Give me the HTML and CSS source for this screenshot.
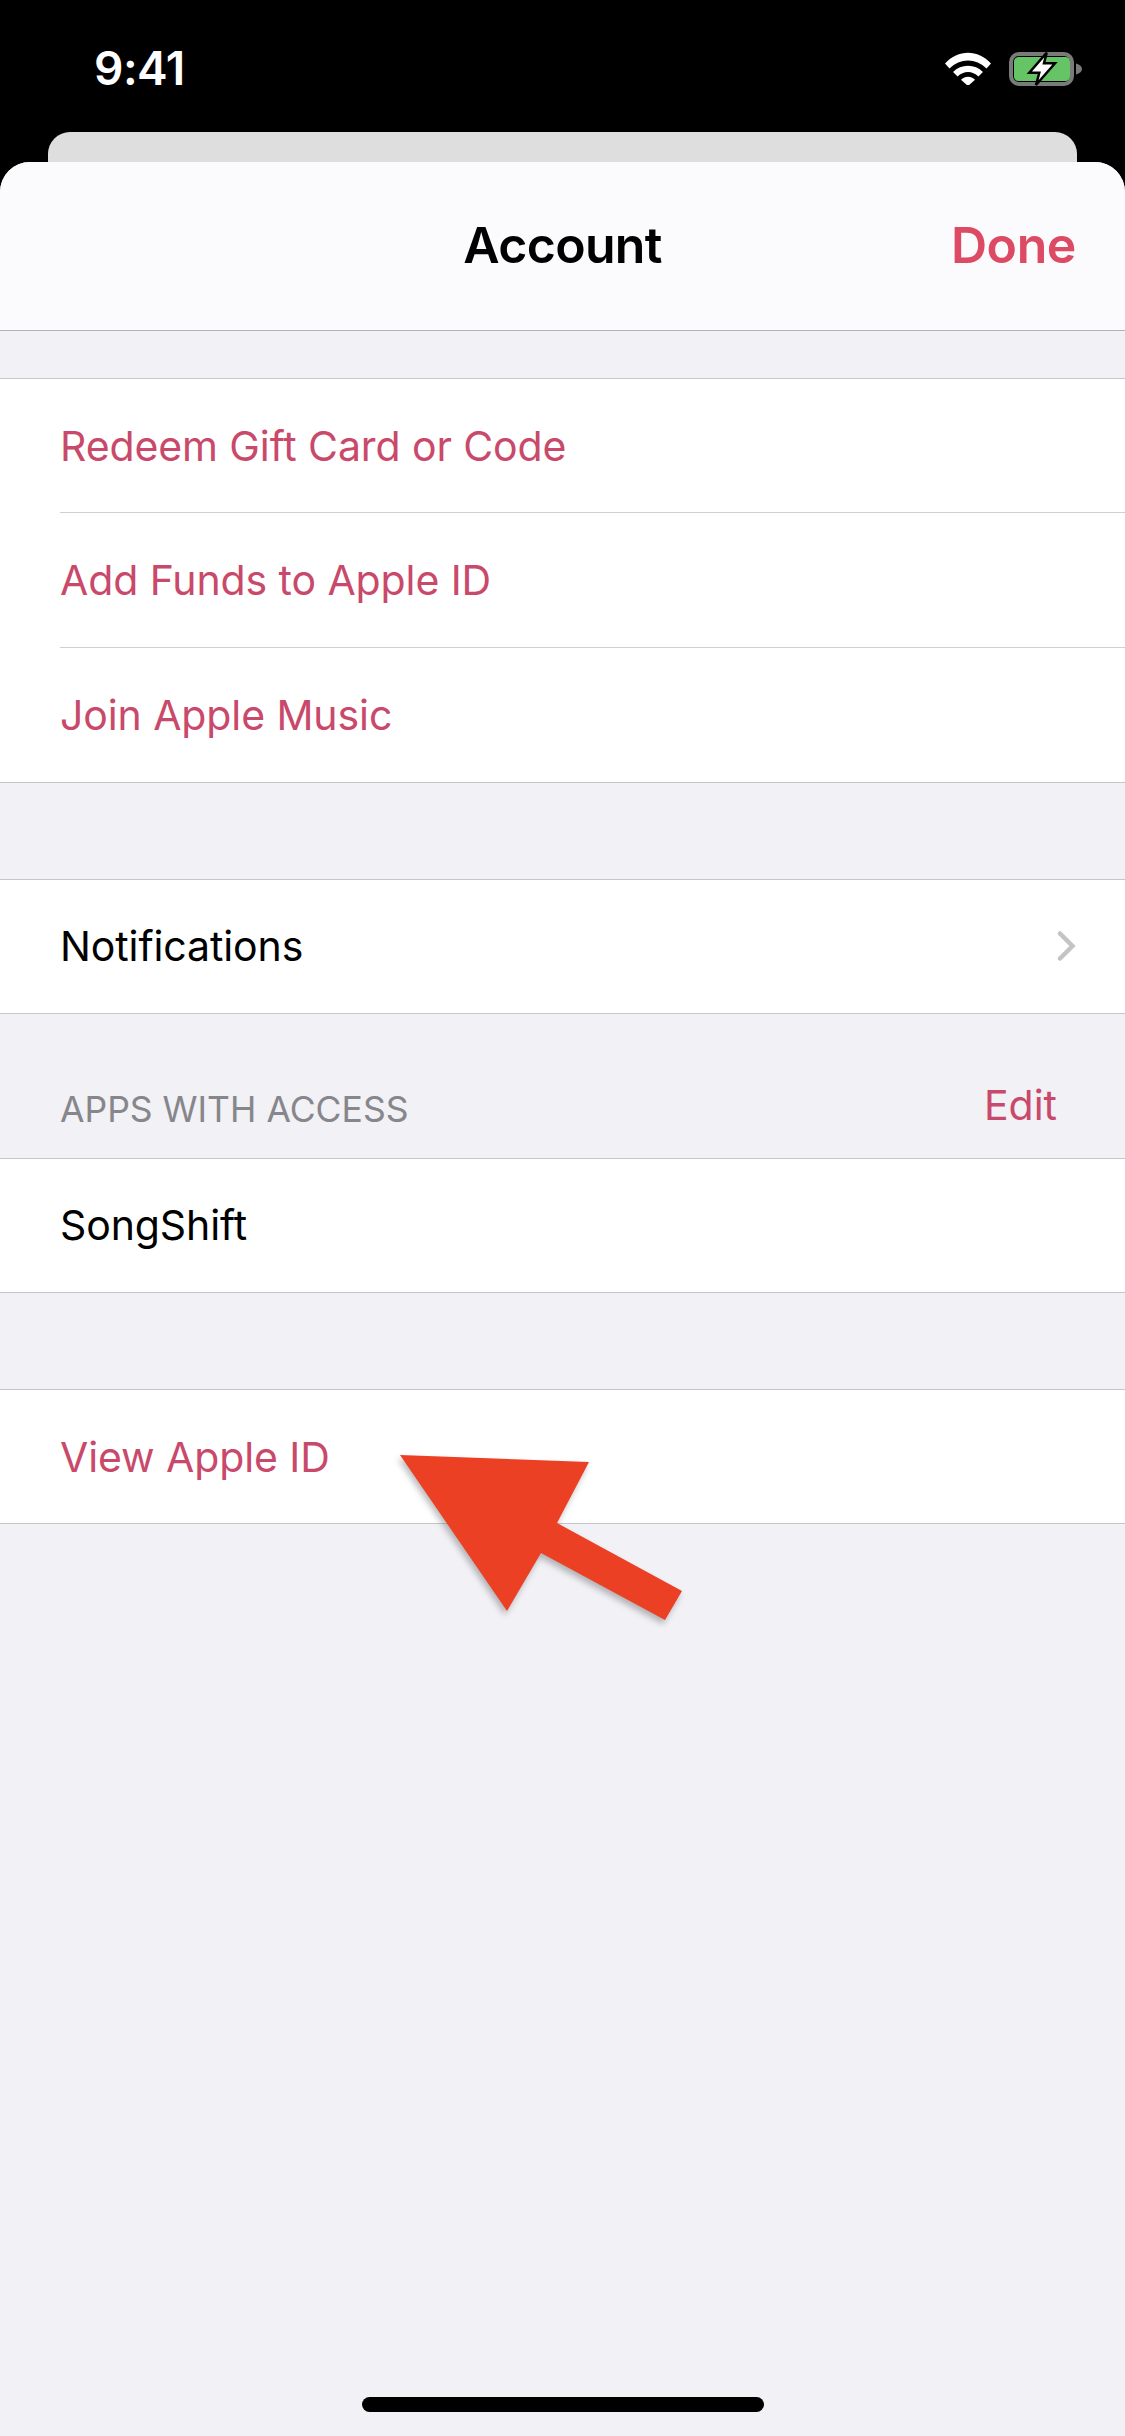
FILE: index.html
```html
<!DOCTYPE html>
<html lang="en">
<head>
<meta charset="utf-8">
<title>Account</title>
<link rel="stylesheet" href="styles.css">
</head>
<body>
<div class="screen">
  <header class="status">
    <span class="time">9:41</span>
    <div class="status-icons">
      <svg class="wifi" width="46" height="33" viewBox="0 0 46 33">
        <path d="M0 11.5C13 -3 33 -3 46 11.5L41.5 16.5C31 5.8 15 5.8 4.5 16.5Z" fill="#fff"/>
        <path d="M8 20C16 11.5 30 11.5 38 20L33.4 24.6C27.5 18.6 18.5 18.6 12.6 24.6Z" fill="#fff"/>
        <path d="M16 27.8C20 23.6 26 23.6 30 27.8L23 34Z" fill="#fff"/>
      </svg>
      <svg class="battery" width="74" height="34" viewBox="0 0 74 34">
        <rect x="2" y="2" width="61" height="30" rx="8" fill="none" stroke="#7a7a7a" stroke-width="4"/>
        <rect x="5" y="5" width="56" height="24" rx="4.5" fill="#65c466"/>
        <path d="M67 11.5C71 12.5 73 14.5 73 17C73 19.5 71 21.5 67 22.5Z" fill="#7a7a7a"/>
        <path d="M37.7 0.7L20.3 20.7H30.3L27 33L46 11.3H35Z" fill="#fff" stroke="#000" stroke-width="2.5" stroke-linejoin="miter"/>
      </svg>
    </div>
  </header>

  <div class="back-sheet"></div>

  <main class="sheet">
    <nav class="navbar">
      <h1 class="nav-title">Account</h1>
      <span class="nav-done">Done</span>
    </nav>

    <section class="group group-first">
      <div class="row row-link"><span>Redeem Gift Card or Code</span></div>
      <div class="row row-link"><span>Add Funds to Apple ID</span></div>
      <div class="row row-link"><span>Join Apple Music</span></div>
    </section>

    <section class="group group-gap">
      <div class="row row-plain">
        <span>Notifications</span>
        <svg class="chevron" width="20" height="32" viewBox="0 0 20 32">
          <path d="M3 3.5L15.5 16L3 28.5" fill="none" stroke="#c4c4c7" stroke-width="4.5" stroke-linecap="round"/>
        </svg>
      </div>
    </section>

    <div class="section-header">
      <span class="section-label">APPS WITH ACCESS</span>
      <span class="section-edit">Edit</span>
    </div>

    <section class="group">
      <div class="row row-plain"><span>SongShift</span></div>
    </section>

    <section class="group group-gap">
      <div class="row row-link"><span>View Apple ID</span></div>
    </section>

    <div class="home-indicator"></div>
  </main>

  <svg class="arrow" width="1125" height="2436" viewBox="0 0 1125 2436">
    <polygon class="arrow-shape" points="400,1455 589,1462 557,1523 682,1591 665,1620 541,1553 507,1611"/>
  </svg>
</div>
</body>
</html>
```
FILE: styles.css
```css
* { box-sizing: border-box; margin: 0; padding: 0; }
html, body { width: 1125px; height: 2436px; overflow: hidden; background: #000; }
body { font-family: "Inter", "Liberation Sans", sans-serif; }
.screen { position: relative; width: 1125px; height: 2436px; background: #000; overflow: hidden; }

.status { height: 132px; display: flex; justify-content: space-between; align-items: flex-start; padding: 44px 42px 0 94px; color: #fff; }
.time { font-size: 46px; line-height: 48px; font-weight: 600; letter-spacing: -0.5px; }
.status-icons { display: flex; gap: 18px; padding-top: 8px; align-items: flex-start; }
.wifi, .battery { display: block; }

.back-sheet { position: absolute; left: 48px; top: 132px; width: 1029px; height: 60px; background: #dedede; border-radius: 22px 22px 0 0; }

.sheet { position: absolute; left: 0; top: 162px; width: 1125px; height: 2274px; background: #f1f1f6; border-radius: 30px 30px 0 0; overflow: hidden; display: flex; flex-direction: column; }

.navbar { height: 169px; flex: none; background: #fbfbfd; border-bottom: 1px solid #b4b4b6; display: flex; align-items: center; justify-content: center; position: relative; padding-bottom: 3px; }
.nav-title { font-size: 50px; font-weight: 600; color: #000; letter-spacing: -0.7px; }
.nav-done { position: absolute; right: 49px; top: 54px; font-size: 50px; line-height: 58px; font-weight: 600; color: #dc4a64; letter-spacing: -0.4px; }

.group { background: #fff; border-top: 1px solid #c6c6c9; border-bottom: 1px solid #c6c6c9; flex: none; }
.group-first { margin-top: 47px; }
.group-gap { margin-top: 96px; }
.row { height: 133px; margin-left: 60px; padding-right: 48px; display: flex; align-items: center; justify-content: space-between; font-size: 41px; letter-spacing: -0.1px; }
.row + .row { height: 135px; border-top: 1px solid #d0d0d3; }
.row-link { color: #c9496b; }
.row-plain { color: #000; padding-bottom: 2px; }
.chevron { display: block; }

.section-header { height: 144px; flex: none; padding: 0 68px 0 60px; display: flex; justify-content: space-between; align-items: flex-end; }
.section-label { font-size: 35.5px; color: #86868b; padding-bottom: 28px; line-height: 40px; }
.section-edit { font-size: 41px; color: #c9496b; padding-bottom: 28px; line-height: 50px; }

.home-indicator { position: absolute; left: 362px; top: 2235px; width: 402px; height: 15px; border-radius: 8px; background: #000; }

.arrow { position: absolute; left: 0; top: 0; pointer-events: none; }
.arrow-shape { fill: #ec4025; filter: drop-shadow(-2px 4px 3px rgba(60, 60, 60, 0.35)); }
```
